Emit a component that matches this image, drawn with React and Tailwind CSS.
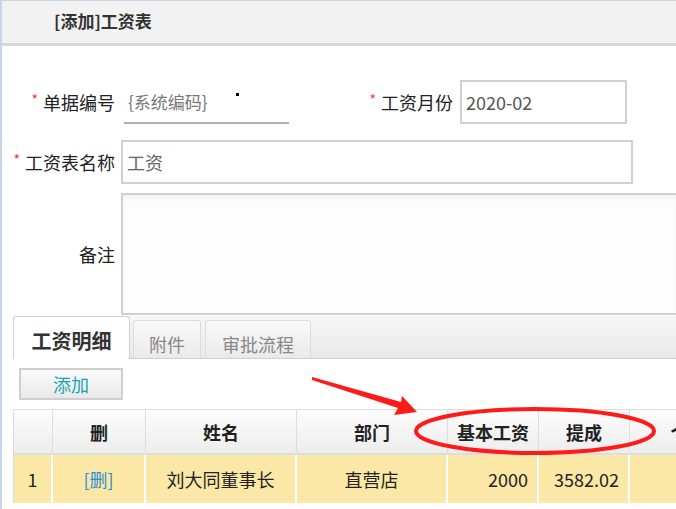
const cols = [
  { w: 'w-[39px]', head: '', cell: '1', align: 'justify-center' },
  { w: 'w-[93px]', head: '删', cell: '[删]', align: 'justify-center', link: true },
  { w: 'w-[151px]', head: '姓名', cell: '刘大同董事长', align: 'justify-center' },
  { w: 'w-[151px]', head: '部门', cell: '直营店', align: 'justify-center' },
  { w: 'w-[91px]', head: '基本工资', cell: '2000', align: 'justify-end pr-[9px]' },
  { w: 'w-[91px]', head: '提成', cell: '3582.02', align: 'justify-end pr-[9px]' },
  { w: 'w-[118px]', head: '个税', cell: '', align: 'justify-center' },
]

function Star() {
  return <span className="relative -top-[3px] mr-[5px] text-[14px] text-[#f33]">*</span>
}

function Label({ children, star, className = '' }) {
  return (
    <div className={`flex shrink-0 items-center justify-end text-[18px] text-[#222] ${className}`}>
      {star && <Star />}
      {children}
    </div>
  )
}

export default function App() {
  return (
    <div className="relative h-[509px] w-[676px] overflow-hidden border-l-2 border-t border-[#c8d6ea] bg-white font-['Noto_Sans_CJK_SC',sans-serif] leading-none">
      <div className="flex h-[45px] items-center border-b-[3px] border-[#d6d6d6] bg-[#f2f2f2] pb-[3px] pl-[52px] text-[17px] font-bold text-[#333]">
        [添加]工资表
      </div>

      <div className="mt-[34px] flex h-[44px] items-center">
        <Label star className="w-[113px]">单据编号</Label>
        <div className="relative ml-[9px] flex h-[44px] w-[165px] items-center border-b-2 border-[#b0b0b0] pl-[4px] text-[17px] text-[#777]">
          {'{系统编码}'}
          <span className="absolute left-[112px] top-[13px] h-[3px] w-[3px] bg-black" />
        </div>
        <Label star className="w-[164px]">工资月份</Label>
        <div className="ml-[7px] flex h-[44px] w-[167px] items-center border-2 border-[#d0d0d0] pl-[4px] text-[18px] text-[#555]">
          2020-02
        </div>
      </div>

      <div className="mt-[16px] flex h-[44px] items-center">
        <Label star className="w-[113px]">工资表名称</Label>
        <div className="ml-[6px] flex h-[44px] w-[512px] items-center border-2 border-[#d0d0d0] pl-[4px] text-[18px] text-[#666]">
          工资
        </div>
      </div>

      <div className="mt-[9px] flex h-[122px] items-center">
        <Label className="w-[113px]">备注</Label>
        <div className="ml-[6px] h-[122px] flex-1 border-2 border-r-0 border-[#d0d0d0] bg-[#fdfdfd] shadow-[inset_0_4px_4px_rgba(0,0,0,0.04)]" />
      </div>

      <div className="ml-[11px] mt-[1px] flex h-[43px] items-end border-b border-[#d0d0d0] bg-gradient-to-b from-[#f6f6f6] to-[#e9e9e9]">
        <div className="-mb-px flex h-[43px] w-[117px] items-center justify-center rounded-t-[3px] border border-b-0 border-[#cfcfcf] bg-white pt-[6px] text-[20px] font-bold text-[#333]">
          工资明细
        </div>
        <div className="ml-[3px] flex h-[38px] w-[68px] items-center justify-center rounded-t-[3px] border border-b-0 border-[#dcdcdc] bg-gradient-to-b from-[#f9f9f9] to-[#eaeaea] pt-[8px] text-[18px] text-[#888]">
          附件
        </div>
        <div className="ml-[4px] flex h-[38px] w-[106px] items-center justify-center rounded-t-[3px] border border-b-0 border-[#dcdcdc] bg-gradient-to-b from-[#f9f9f9] to-[#eaeaea] pt-[8px] text-[18px] text-[#888]">
          审批流程
        </div>
      </div>

      <div className="ml-[17px] mt-[9px] flex h-[32px] w-[104px] items-center justify-center border-2 border-[#cfcfcf] bg-gradient-to-b from-[#fbfbfb] to-[#e9e9e9] text-[18px] text-[#1aa3b3]">
        添加
      </div>

      <div className="ml-[11px] mt-[9px]">
        <div className="flex h-[46px] border-b-2 border-l border-t border-[#dddddd] bg-gradient-to-b from-[#fcfcfc] to-[#ededed]">
          {cols.map((c, i) => (
            <div key={i} className={`flex shrink-0 items-center justify-center border-r border-[#dddddd] text-[18px] font-bold text-[#222] ${c.w}`}>
              {c.head}
            </div>
          ))}
        </div>
        <div className="flex h-[48px] border-l border-[#dddddd] bg-[#fce8a6]">
          {cols.map((c, i) => (
            <div key={i} className={`flex shrink-0 items-center border-r-2 border-white text-[18px] ${c.link ? 'text-[#2b8fd0]' : 'text-[#222]'} ${c.align} ${c.w}`}>
              {c.cell}
            </div>
          ))}
        </div>
      </div>

      <svg className="pointer-events-none absolute left-[-2px] top-[-1px] h-[509px] w-[676px]" viewBox="0 0 676 509">
        <polygon points="312,377 401,402 402,396 417,412 394,415 398,408 312,380" fill="#ff1a1a" />
        <ellipse cx="535" cy="431" rx="119" ry="22" fill="none" stroke="#ff1a1a" strokeWidth="4" />
      </svg>
    </div>
  )
}
